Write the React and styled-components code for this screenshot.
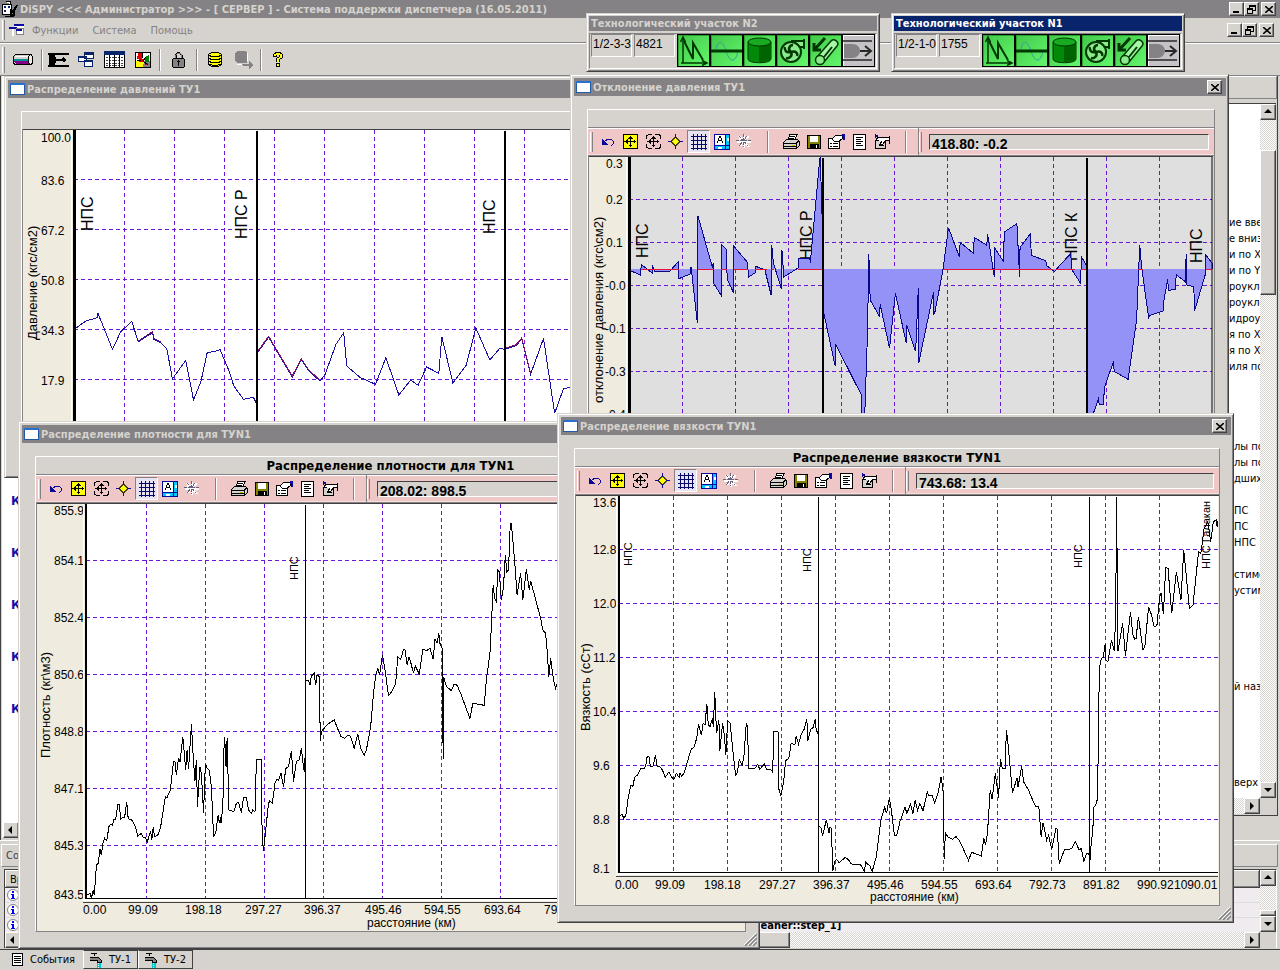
import React from 'react';
import styled, { createGlobalStyle, css } from 'styled-components';

const GlobalStyle = createGlobalStyle`
  * { box-sizing: border-box; }
  body {
    margin: 0;
    background: #d6d3ce;
    font-family: 'DejaVu Sans Condensed', 'DejaVu Sans', sans-serif;
    font-size: 11px;
    color: #000;
    overflow: hidden;
  }
  button { font: inherit; color: inherit; }
  svg { flex-shrink: 0; }
`;

const raised = css`
  border: 1px solid;
  border-color: #fff #424142 #424142 #fff;
  box-shadow: inset -1px -1px 0 #848284;
`;
const sunken = css`
  border: 1px solid;
  border-color: #848284 #fff #fff #848284;
`;

const App = styled.div`
  position: relative;
  display: flex;
  flex-direction: column;
  min-height: 100vh;
  overflow: hidden;
`;

const TitleBar = styled.header`
  display: flex;
  align-items: center;
  height: 18px;
  padding: 0 4px 0 2px;
  background: #848284;
  color: #d6d3ce;
  h1 {
    flex: 1;
    margin: 0 0 0 2px;
    font-size: 11px;
    font-weight: bold;
    white-space: nowrap;
  }
`;
const MenuBar = styled.nav`
  display: flex;
  align-items: center;
  height: 25px;
  padding: 0 6px 0 2px;
  border-bottom: 1px solid #848284;
`;
const MenuItem = styled.button`
  margin-right: 14px;
  padding: 0;
  border: 0;
  background: none;
  color: #848284;
`;
const MainToolbar = styled.div`
  display: flex;
  align-items: center;
  height: 33px;
  padding: 0 2px;
  border-top: 1px solid #fff;
  border-bottom: 1px solid #848284;
`;
const ToolButton = styled.button`
  display: flex;
  align-items: center;
  justify-content: center;
  width: ${({ $w }) => $w || 28}px;
  height: 24px;
  padding: 0;
  border: 0;
  background: none;
`;
const Grip = styled.span`
  width: 3px;
  height: ${({ $h }) => $h || 26}px;
  margin-right: ${({ $gap }) => $gap || 0}px;
  border-left: 1px solid #fff;
  border-right: 1px solid #848284;
`;
const Divider = styled.span`
  width: 2px;
  height: 22px;
  margin: 0 ${({ $gap = 4 }) => $gap}px;
  border-left: 1px solid #848284;
  border-right: 1px solid #fff;
`;

const WinButtons = styled.div`
  display: flex;
  margin-left: auto;
  button:last-child { margin-left: 2px; }
`;
const WinButton = styled.button`
  ${raised}
  display: flex;
  align-items: center;
  justify-content: center;
  width: 15px;
  height: 14px;
  padding: 0;
  background: #d6d3ce;
`;

const Workspace = styled.main`
  display: flex;
  align-items: flex-start;
  flex: 1;
  padding-left: 1px;
  border-left: 1px solid #424142;
`;
const TreePane = styled.section`
  display: flex;
  flex-direction: column;
  width: 40px;
  height: 762px;
  border-left: 1px solid #fff;
  background: #fff;
  ul {
    flex: 1;
    margin: 0;
    padding: 399px 0 0 8px;
    list-style: none;
  }
  li {
    height: 52px;
    line-height: 52px;
    color: #1810a5;
    font-size: 13px;
    font-weight: bold;
  }
`;
const HintPane = styled.section`
  flex: 1;
  height: 740px;
  margin-right: 2px;
  border-right: 1px solid #424142;
  border-bottom: 1px solid #424142;
`;
const PaneCaption = styled.div`
  height: 23px;
  padding: 4px;
  border: 1px solid;
  border-color: #fff #848284 #848284 #fff;
`;
const HintBody = styled.div`
  display: grid;
  grid-template-columns: 1fr 16px;
  grid-template-rows: 694px 16px;
  margin: 4px 1px 0 0;
  border-top: 1px solid #424142;
`;
const HintList = styled.ul`
  margin: 0;
  padding: 111px 0 0;
  background: #fff;
  list-style: none;
  overflow: hidden;
`;
const HintLine = styled.li`
  width: ${({ $w }) => $w}px;
  height: 16px;
  margin-left: auto;
  line-height: 16px;
  white-space: pre;
  overflow: hidden;
`;

const ScrollTrack = styled.div`
  display: flex;
  flex-direction: ${({ $dir }) => ($dir === 'row' ? 'row' : 'column')};
  background: repeating-conic-gradient(#fff 0 25%, #d6d3ce 0 50%) 0 0 / 2px 2px;
`;
const ScrollButton = styled.button`
  ${raised}
  display: flex;
  align-items: center;
  justify-content: center;
  width: 16px;
  height: 16px;
  padding: 0;
  background: #d6d3ce;
`;
const ScrollThumb = styled.div`
  ${raised}
  background: #d6d3ce;
  ${({ $dir, $size }) => ($dir === 'row' ? `width: ${$size}px;` : `height: ${$size}px;`)}
`;
const Spring = styled.div`
  ${({ $size }) => ($size ? `flex: 0 0 ${$size}px;` : 'flex: 1;')}
`;

const LogDock = styled.section`
  height: 110px;
  padding: 3px 2px 0 1px;
  border-top: 1px solid #fff;
  border-bottom: 1px solid #424142;
`;
const LogCaption = styled(PaneCaption)`
  color: #424142;
`;
const LogBody = styled.div`
  display: grid;
  grid-template-columns: 1fr 16px;
  grid-template-rows: 62px 16px;
  margin: 2px 1px 0 3px;
  border-top: 1px solid #424142;
  border-left: 1px solid #424142;
  border-right: 1px solid #fff;
`;
const LogTable = styled.table`
  width: 100%;
  border-collapse: collapse;
  table-layout: fixed;
  background: #efebef;
  th, td {
    height: 15px;
    padding: 0;
    text-align: left;
    line-height: 13px;
    white-space: nowrap;
    overflow: hidden;
    border-bottom: 1px solid #dedbde;
  }
  th {
    ${raised}
    height: 17px;
    padding-left: 4px;
    background: #d6d3ce;
    font-weight: normal;
  }
  th:first-child, td:first-child { width: 755px; }
  tbody tr:last-child td { border-top: 1px dotted #000; font-weight: bold; }
  svg { display: block; }
`;

const TabStrip = styled.div`
  display: flex;
  align-items: stretch;
  height: 20px;
`;
const Tab = styled.button`
  display: flex;
  align-items: center;
  gap: ${({ $active }) => ($active ? 7 : 5)}px;
  height: 19px;
  padding: 0 ${({ $active }) => ($active ? '8px 0 12px' : '6px 0 5px')};
  border: 0;
  background: #d6d3ce;
  ${({ $active }) => !$active && css`
    border-left: 1px solid #fff;
    border-right: 1px solid #424142;
    border-bottom: 1px solid #424142;
    border-top: 1px solid #424142;
  `}
`;

/* floating windows */
const Frame = styled.section`
  position: absolute;
  left: ${({ $x }) => $x}px;
  top: ${({ $y }) => $y}px;
  width: ${({ $w }) => $w}px;
  height: ${({ $h }) => $h}px;
  padding: 2px;
  border: 1px solid;
  border-color: #d6d3ce #424142 #424142 #d6d3ce;
  box-shadow: inset 1px 1px 0 #fff, inset -1px -1px 0 #848284;
  background: #d6d3ce;
`;
const FrameTitle = styled.header`
  display: flex;
  align-items: center;
  height: 18px;
  margin: 1px 0 0 1px;
  padding: 0 4px 0 2px;
  background: #848284;
  color: #d6d3ce;
  h2 {
    flex: 1;
    margin: 0 0 0 2px;
    font-size: 11px;
    font-weight: bold;
    white-space: nowrap;
  }
`;
const FramePanel = styled.div`
  margin: 13px 11px 0 14px;
  border: 1px solid;
  border-color: #fff #848284 #848284 #fff;
`;
const PanelHeading = styled.h3`
  height: 17px;
  margin: 0;
  font-size: 13px;
  line-height: 17px;
  text-align: center;
`;
const PinkBar = styled.div`
  display: flex;
  align-items: center;
  height: 29px;
  border-top: 1px solid #848284;
  border-bottom: 1px solid #848284;
  box-shadow: inset 0 1px 0 #fff, inset 0 -1px 0 #f7dfde;
  background: #efc7c6;
`;
const PinkGroup = styled.div`
  display: flex;
  align-items: center;
  width: 331px;
  height: 27px;
  padding-left: 2px;
  border-right: 1px solid #848284;
`;
const PinkButton = styled.button`
  display: flex;
  align-items: center;
  justify-content: center;
  width: 23px;
  height: 23px;
  padding: 0;
  border: 1px solid transparent;
  background: none;
  ${({ $pressed }) => $pressed && css`
    border-color: #848284 #fff #fff #848284;
    background: #e7e3f0;
  `}
`;
const Readout = styled.output`
  flex: 1;
  height: 16px;
  margin: 0 5px;
  padding: 2px 2px 0;
  border: 1px solid;
  border-color: #424142 #fff #fff #424142;
  background: #d6d3ce;
  font-family: 'Liberation Sans', Arial, sans-serif;
  font-size: 14px;
  font-weight: bold;
  line-height: 14px;
  overflow: hidden;
`;
const ChartSvg = styled.svg`
  display: block;
  font-family: 'Liberation Sans', Arial, sans-serif;
  font-size: 12px;
`;
const ResizeGrip = styled.svg`
  position: absolute;
  right: 2px;
  bottom: 2px;
`;

/* floating section palettes */
const Palette = styled.section`
  position: absolute;
  left: ${({ $x }) => $x}px;
  top: 13px;
  width: 294px;
  padding: 2px;
  border: 1px solid;
  border-color: #d6d3ce #424142 #424142 #d6d3ce;
  box-shadow: inset 1px 1px 0 #fff, inset -1px -1px 0 #848284;
  background: #d6d3ce;
  h2 {
    height: 15px;
    margin: 0 0 2px;
    padding-left: 2px;
    background: ${({ $active }) => ($active ? '#08246b' : '#848284')};
    color: ${({ $active }) => ($active ? '#fff' : '#d6d3ce')};
    font-size: 11px;
    line-height: 15px;
    white-space: nowrap;
  }
`;
const PaletteBody = styled.div`
  ${sunken}
  display: flex;
  height: 36px;
  padding: 0 1px;
`;
const PaletteCell = styled.span`
  ${sunken}
  width: ${({ $w }) => $w}px;
  height: 23px;
  margin-right: 2px;
  padding: 2px 0 0 1px;
  font-family: 'Liberation Sans', Arial, sans-serif;
  font-size: 12px;
  line-height: 14px;
  white-space: nowrap;
`;
const StateButton = styled.button`
  width: 33px;
  height: 33px;
  padding: 0;
  border: 1px solid #000;
  background: ${({ $off }) => ($off ? '#c6c3c6' : 'linear-gradient(135deg, #42c74a, #63f76b)')};
  box-shadow: inset 1px 1px 0 ${({ $off }) => ($off ? '#fff' : '#29a229')};
  svg { display: block; }
`;

const Arrow = ({ dir }) => {
  const d = { up: 'M0 5L4 1L8 5z', down: 'M0 2L4 6L8 2z', left: 'M5 0L1 4L5 8z', right: 'M2 0L6 4L2 8z' }[dir];
  return <svg width="8" height="8" aria-hidden="true"><path d={d} /></svg>;
};

const VScroll = ({ offset, thumb }) => (
  <ScrollTrack>
    <ScrollButton aria-label="Вверх"><Arrow dir="up" /></ScrollButton>
    <Spring $size={offset} />
    <ScrollThumb $size={thumb} />
    <Spring />
    <ScrollButton aria-label="Вниз"><Arrow dir="down" /></ScrollButton>
  </ScrollTrack>
);

const HScroll = ({ thumb }) => (
  <ScrollTrack $dir="row">
    <ScrollButton aria-label="Влево"><Arrow dir="left" /></ScrollButton>
    <ScrollThumb $dir="row" $size={thumb} />
    <Spring />
    <ScrollButton aria-label="Вправо"><Arrow dir="right" /></ScrollButton>
  </ScrollTrack>
);

const CloseGlyph = () => (
  <svg width="8" height="7" stroke="#000"><path d="M0 0L8 7M8 0L0 7" strokeWidth="1.6" /></svg>
);

const WindowControls = () => (
  <WinButtons>
    <WinButton aria-label="Свернуть"><svg width="8" height="8"><path d="M0 6h6v2H0z" /></svg></WinButton>
    <WinButton aria-label="Восстановить">
      <svg width="9" height="9" fill="none" stroke="#000" shapeRendering="crispEdges">
        <path d="M2.5 3V.5h6v5H6M2 1.5h7M.5 3.5h5v5h-5zM0 4.5h6" />
      </svg>
    </WinButton>
    <WinButton aria-label="Закрыть"><CloseGlyph /></WinButton>
  </WinButtons>
);

/* ---- icons ---- */
const icon = (w, h, body) => (
  <svg width={w} height={h} viewBox={`0 0 ${w} ${h}`} fill="none" stroke="#000" shapeRendering="crispEdges" aria-hidden="true">
    {body}
  </svg>
);

const appIcon = icon(16, 16, <>
  <path d="M.5 3.5h9v10h-9zM3.5.5h5v3" fill="#fff" />
  <path d="M2 5h2v2H2zM6 5h2v2H6zM2 9h2v2H2z" fill="#08246b" stroke="none" />
  <path d="M3 15.500h9M9 8v6h3V8M8 9l3 2 4-7" strokeWidth="2" />
</>);
const mdiIcon = icon(16, 14, <>
  <path d="M5 1h10v4H5z" fill="#fff" stroke="none" />
  <path d="M5 1h10v2H5zM0 4h8v2H0z" fill="#08089c" stroke="none" />
  <path d="M7.500 5.500h7v6h-7z" fill="#fff" stroke="#848284" />
  <path d="M7 6h6v2H7z" fill="#08089c" stroke="none" />
  <path d="M3.500 6v7" stroke="#fff" strokeWidth="2" />
</>);
const pipeIcon = icon(21, 12, <>
  <rect x=".5" y=".5" width="19" height="10" rx="3" fill="#d6d3ce" />
  <path d="M1 5h15v2H1z" fill="#009294" stroke="none" />
  <path d="M1 7h15v3H3z" fill="#840084" stroke="none" />
  <path d="M2 2.500h14" stroke="#fff" />
  <ellipse cx="17.500" cy="5.500" rx="2" ry="5" fill="#efebde" />
</>);
const valveIcon = icon(21, 14, <>
  <path d="M0 1h21M0 13h21" strokeWidth="2" />
  <path d="M1 2h5l2 5-2 5H1z" fill="#000" />
  <path d="M8 7h9M15 5l2 2-2 2" strokeWidth="1.500" />
</>);
const cascadeIcon = icon(16, 15, <>
  <path d="M6.500.5h9v6h-9zM.5 4.500h8v5h-8zM6.500 8.500h8v6h-8z" fill="#fff" stroke="#08246b" />
  <path d="M6 0h10v3H6zM0 4h9v2H0zM6 8h9v2H6z" fill="#08246b" stroke="none" />
</>);
const tableIcon = icon(21, 17, <>
  <path d="M.5.5h20v16H.5z" fill="#fff" />
  <path d="M0 0h21v4H0z" fill="#08246b" stroke="none" />
  <path d="M2 6.500h17M2 9.500h17M2 12.500h17M2 14.500h17" strokeDasharray="2 1" stroke="#424142" />
  <path d="M5.500 4v13M10.500 4v13M15.500 4v13" />
</>);
const puzzleIcon = icon(16, 16, <>
  <path d="M.5.5h15v15H.5z" fill="#fff" />
  <path d="M1 9l4-1 4 2v5H1z" fill="#ffff00" stroke="none" />
  <path d="M9 9h6v6H8z" fill="#848284" stroke="none" />
  <path d="M3 1h4v6h2v3H4V7H2zM10 11h3v2h-3z" fill="#e70000" stroke="none" />
  <path d="M9 6l5-3v7h-4z" fill="#008200" stroke="none" />
  <path d="M7 1v5M2 8h4M11 5l-3 4 5 4" />
</>);
const lockIcon = icon(13, 16, <>
  <path d="M3.500 7V3l2-2h2l2 2v4" strokeWidth="2" />
  <path d="M3.500 7V3l2-2h2l2 2v4" stroke="#fff" strokeWidth=".5" />
  <rect x=".5" y="6.500" width="12" height="9" rx="2" fill="#848284" />
  <path d="M6.500 8v6M5 9.500h3" />
</>);
const dbIcon = icon(14, 15, <>
  <path d="M.5 2.500l3-2h7l3 2v10l-3 2h-7l-3-2z" fill="#ffff00" />
  <path d="M1 3.500l3 1h6l3-1M1 6.500l3 1h6l3-1M1 9.500l3 1h6l3-1M1 12l3 1h6l3-1" />
</>);
const dbOffIcon = icon(19, 18, <>
  <path d="M1 2l3-2h7l2 2v10H4l-3-2z" fill="#848284" stroke="none" />
  <path d="M8 13h7v-3l4 4-4 4v-3H9z" fill="#848284" stroke="none" />
  <path d="M3 13.500h5M13.500 2v8" stroke="#fff" />
</>);
const helpIcon = icon(10, 15, <>
  <path d="M2 5V3l2-2h2l2 2v2L5 7v3" strokeWidth="3.500" />
  <path d="M2 4V3l2-1h2l2 1v2L5 7v3" stroke="#ffff00" strokeWidth="1.500" />
  <path d="M3.500 11.500h3v3h-3z" fill="#ffff00" />
</>);

const fourArrows = (
  <>
    <path d="M7.500 2v11M2 7.500h11" />
    <path d="M7.500 1.500l2.500 3H5zM7.500 13.500l2.500-3H5zM1.500 7.500l3-2.500v5zM13.500 7.500l-3-2.500v5z" fill="#000" stroke="none" />
  </>
);
const viewIcons = [
  ['Отменить', icon(13, 9, <><path d="M3 5l4-3h3l2 2v3l-2 2" stroke="#08089c" /><path d="M1 2v6h6z" fill="#08089c" stroke="none" /></>)],
  ['Увеличить', icon(15, 15, <><path d="M.5.5h14v14H.5z" fill="#ffff00" />{fourArrows}</>)],
  ['Весь график', icon(15, 15, <><path d="M.5 5V2l2-1.500H6M9 .5h4l1.500 1.500v3M.5 10v3l2 1.500H6M14.500 10v3l-1.500 1.500h-4" />{fourArrows}</>)],
  ['Центр', icon(15, 15, <><path d="M7.500 3l4.500 4.500L7.500 12 3 7.500z" fill="#ffff00" stroke="#424100" /><path d="M7.500 0v4M7.500 11v4M0 7.500h4M11 7.500h4" stroke="#08089c" /></>)],
  ['Сетка', icon(16, 16, <path d="M2.500 0v16M6.500 0v16M10.500 0v16M14.500 0v16M0 2.500h16M0 6.500h16M0 10.500h16M0 14.500h16" stroke="#08086b" />)],
  ['Подписи', icon(16, 16, <><path d="M.5.5h15v15H.5z" fill="#00c7ff" stroke="#08089c" /><path d="M1 1h10v10H1z" fill="#fff" stroke="none" /><path d="M11.500 1v14M1 11.500h14" stroke="#08089c" /><path d="M3 9l3-7 3 7M4 6.500h4" /><path d="M4 13.500h4M13.500 4v3" stroke="#fff" strokeWidth="2" /></>)],
  ['Без сетки', icon(16, 15, <><path d="M3 2l10 11M8 1v13M1 8h14M12 2L4 12M3 5l3 1M10 4l3-1" stroke="#fff" strokeWidth="2" /><path d="M3 2l9 10M7.500 0v13M0 6.500h15M11 2L3 12" stroke="#63617b" strokeDasharray="3 1" /></>)],
];
const fileIcons = [
  ['Печать', icon(17, 15, <><path d="M5 6l2-5.500h7L12 6" fill="#fff" /><path d="M.5 8.500l3-3h11l2 2v4l-3 3H.5z" fill="#d6d3ce" /><path d="M1 9.500h12v5M13 9l3-2M1 12.500h12M7 2.500h5M6 4.500h5" /><path d="M9 11h3" stroke="#c6c300" /></>)],
  ['Сохранить', icon(14, 14, <><path d="M.5.5h13v13H.5z" fill="#848200" /><path d="M3 1h8v6H3z" fill="#fff" stroke="none" /><path d="M3 9h8v5H3z" fill="#000" /><path d="M9.500 10v3" stroke="#fff" /></>)],
  ['Свойства', icon(17, 15, <><path d="M.5 4.500h11v10H.5z" fill="#fff" /><path d="M2 9.500h2M5 9.500h5M2 12.500h2M5 12.500h5" /><path d="M4 5l3-3 3-1 4 1v3l-3 2-4 1z" fill="#fff" /><path d="M14 0h3v6h-2z" fill="#08089c" stroke="none" /></>)],
  ['Легенда', icon(13, 16, <><path d="M.5.5h12v15H.5z" fill="#fff" /><path d="M3 3.500h7M3 5.500h5M3 7.500h7M3 9.500h5M3 11.500h7" /></>)],
  ['Экспорт', icon(17, 15, <><path d="M1.500 6.500h10v8h-10z" fill="#d6d3ce" /><path d="M2 6l2-3h11v3h-3l-3 4H6l2-3" fill="#fff" /><path d="M1 0l4 2-4 2z" fill="#08089c" stroke="none" /><path d="M15.500 2v8M5 11.500h5" /></>)],
];

const mainIcons = [
  ['Труба', pipeIcon, 32], null,
  ['Задвижка', valveIcon, 27], ['Окна', cascadeIcon, 28], ['Таблица', tableIcon, 29], ['Объекты', puzzleIcon, 28], null,
  ['Блокировка', lockIcon, 31], null,
  ['База данных', dbIcon, 29], ['Выгрузка', dbOffIcon, 29], null,
  ['Справка', helpIcon, 28],
];

const stateIcons = [
  ['Давление', <><path d="M5 28V3M2.500 7L5 2l2.500 5M3 28h25M24 25.500l5 2.500-5 2.500" strokeWidth="1.500" /><path d="M6 6l9 18V8l10 17" strokeWidth="2" /></>],
  ['Баланс', <><path d="M5 14c2-10 7-8 10 2s9 14 12 0" stroke="#399aa5" /><path d="M0 16h31" strokeWidth="3" /></>],
  ['Резервуар', <><path d="M4 7v17c0 5 23 5 23 0V7z" fill="#008a08" /><path d="M15 9v18c7 0 12-1 12-4V7z" fill="#006500" stroke="none" /><ellipse cx="15.500" cy="7" rx="11.500" ry="4" fill="#18aa21" /></>],
  ['Насос', <><path d="M14 6h13v6h-5" strokeWidth="2" fill="#8ceb8c" /><path d="M27 4v10" strokeWidth="2" /><circle cx="14" cy="17" r="10" fill="#8ceb8c" strokeWidth="2" /><path d="M14 17c-4-3-1-7 2-7M14 17c5-2 7 2 6 4M14 17c2 4-2 7-5 6M14 17c-5 1-7-2-6-5" strokeWidth="2.500" /></>],
  ['Скребок', <><path d="M7 22L21 6c3-3 9 1 6 5L14 27" fill="#a5f7a5" strokeWidth="1.500" /><circle cx="10" cy="25" r="4.500" fill="#8ceb8c" strokeWidth="1.500" /><path d="M14 22l8-10" strokeWidth="2" /><path d="M15 3L5 14M4 8v7h7" strokeWidth="3" /></>],
  ['Поток', <><path d="M0 6h29M0 25h29" strokeWidth="1.500" /><path d="M1 9h8c7 0 8 5 8 7s-2 7-8 7H1z" fill="#848284" stroke="none" /><path d="M17 16h10M22 11l6 5-6 5" strokeWidth="2" /></>],
];

const SectionPalette = ({ title, x, active, code, value }) => (
  <Palette $x={x} $active={active}>
    <h2>{title}</h2>
    <PaletteBody>
      <PaletteCell $w={41}>{code}</PaletteCell>
      <PaletteCell $w={42}>{value}</PaletteCell>
      {stateIcons.map(([label, body], i) => (
        <StateButton key={label} aria-label={label} $off={i === 5}>
          <svg width="31" height="31" fill="none" stroke={i === 5 ? '#292829' : '#003900'}>{body}</svg>
        </StateButton>
      ))}
    </PaletteBody>
  </Palette>
);

/* ---- charts ---- */
const Trace = ({ at, scale, points, color = '#000', fill = 'none' }) => (
  <polyline
    points={points}
    transform={`translate(${at}) scale(${scale})`}
    vectorEffect="non-scaling-stroke"
    fill={fill}
    stroke={color}
    shapeRendering="crispEdges"
  />
);

const Chart = ({ box, plot, bg = '#fff', xGrid, yGrid, yLabels, xLabels = [], xLabelY, xTitle, yTitle, stations, axis = 2, children }) => {
  const [x, y, w, h] = box;
  const [px, py, pr, pb] = plot;
  const clip = `ticks-${x}`;
  return (
    <ChartSvg width={w} height={h} viewBox={box.join(' ')} role="img" aria-label={yTitle.text}>
      <clipPath id={clip}><rect x={x} y={y} width={px - x - 3} height={h} /></clipPath>
      <rect x={x} y={y} width={w} height={h} fill="#efebde" />
      <rect x={px} y={py} width={pr - px} height={pb - py} fill={bg} />
      <g stroke="#6b18d6" strokeDasharray="4 3" shapeRendering="crispEdges">
        {xGrid.map((gx) => <line key={gx} x1={gx} x2={gx} y1={py} y2={pb} />)}
        {yGrid.map((gy) => <line key={gy} x1={px} x2={pr} y1={gy} y2={gy} />)}
      </g>
      {stations.map((s) => (
        <text key={s.x} fontSize={s.size} transform={`translate(${s.x} ${s.y}) rotate(-90)`}>{s.text}</text>
      ))}
      {children}
      <g stroke="#000" shapeRendering="crispEdges">
        {stations.filter((s) => s.line).map((s) => (
          <line key={s.line} x1={s.line} x2={s.line} y1={py + 1} y2={pb} strokeWidth={axis === 3 ? 2 : 1} />
        ))}
        <line x1={px} x2={px} y1={py} y2={pb + 1} strokeWidth={axis} />
        <line x1={px - 3} x2={px - 3} y1={py} y2={pb} stroke="#fff" />
        <line x1={x} x2={x + w} y1={y + 0.5} y2={y + 0.5} stroke="#424142" />
        <line x1={x + 0.5} x2={x + 0.5} y1={y} y2={y + h} stroke="#848284" />
        {xTitle && <line x1={px} x2={pr} y1={pb} y2={pb} />}
        {xTitle && <line x1={px - 3} x2={pr} y1={pb + 2} y2={pb + 2} stroke="#fff" strokeWidth="2" />}
        {xTitle && <line x1={px - 3} x2={pr} y1={pb + 4} y2={pb + 4} stroke="#424142" />}
      </g>
      <g clipPath={`url(#${clip})`}>
        {yLabels.map(([label, lx, ly]) => <text key={ly} x={lx} y={ly}>{label}</text>)}
      </g>
      <text fontSize={yTitle.size} transform={`translate(${yTitle.x} ${yTitle.y}) rotate(-90)`}>{yTitle.text}</text>
      {xLabels.map(([label, lx]) => <text key={label} x={lx} y={xLabelY}>{label}</text>)}
      {xTitle && <text x={xTitle.x} y={xTitle.y}>{xTitle.text}</text>}
    </ChartSvg>
  );
};

const steps = (from, step, count) => Array.from({ length: count }, (_, i) => from + step * i);

const PressureChart = () => (
  <Chart
    box={[22, 129, 610, 340]}
    plot={[74, 130, 632, 469]}
    axis={3}
    xGrid={steps(124.5, 50, 10)}
    yGrid={steps(179.5, 50, 6)}
    yLabels={[['100.0', 41, 142], ['83.6', 41, 185], ['67.2', 41, 235], ['50.8', 41, 285], ['34.3', 41, 335], ['17.9', 41, 385]]}
    yTitle={{ text: 'Давление (кгс/см2)', x: 37, y: 340, size: 13 }}
    stations={[
      { text: 'НПС', x: 93, y: 231, size: 16 },
      { text: 'НПС Р', x: 247, y: 239, size: 16, line: 257 },
      { text: 'НПС', x: 495, y: 234, size: 16, line: 505 },
    ]}
  >
    <Trace
      at="0 120" scale="0.37 0.3333" color="#1810a5"
      points="203,626 232,603 263,593 264,578 304,688 326,636 356,604 374,666 412,638 416,658 436,670 451,687 466,777 502,721 523,840 543,785 560,698 590,692 594,687 618,750 632,798 658,838 685,832 693,850 695,857 696,698 726,652 790,771 814,719 836,755 865,783 878,765 908,673 929,638 937,738 974,773 1015,793 1043,713 1078,825 1110,780 1130,796 1153,741 1186,760 1194,650 1224,789 1260,736 1286,624 1324,720 1350,686 1366,688 1395,677 1410,657 1434,763 1469,655 1499,880 1523,806 1545,801"
    />
    <Trace at="0 119" scale="0.37 0.3333" color="#63106b" points="374,666 412,638 416,658 436,670" />
    <Trace at="0 119" scale="0.37 0.3333" color="#8c1063" points="696,698 726,652 790,771 814,719 836,755 865,783" />
    <Trace at="0 119" scale="0.37 0.3333" color="#8c1063" points="1366,688 1395,677 1410,657 1434,763" />
  </Chart>
);

const DeviationChart = () => (
  <Chart
    box={[588, 156, 625, 300]}
    plot={[629, 157, 1212, 456]}
    bg="#dedfde"
    axis={3}
    xGrid={steps(682.5, 53, 10)}
    yGrid={steps(199.5, 43, 6)}
    yLabels={[['0.3', 606, 168], ['0.2', 606, 204], ['0.1', 606, 247], ['-0.0', 605, 290], ['-0.1', 605, 333], ['-0.3', 605, 376], ['-0.4', 605, 419]]}
    yTitle={{ text: 'отклонение давления (кгс\\см2)', x: 603, y: 403, size: 13 }}
    stations={[
      { text: 'НПС', x: 648, y: 258, size: 16 },
      { text: 'НПС Р', x: 812, y: 260, size: 16, line: 823 },
      { text: 'НПС К', x: 1077, y: 261, size: 16, line: 1087 },
      { text: 'НПС', x: 1202, y: 263, size: 16 },
    ]}
  >
    <Trace
      at="575 120" scale="0.45 0.3333" color="#08088c" fill="#9492f7"
      points="120,447 122,451 146,466 147,433 172,460 173,441 178,455 210,455 230,424 231,476 256,462 258,440 272,610 273,287 305,440 307,430 308,490 325,526 326,374 337,388 338,476 352,518 353,379 384,428 385,472 401,458 402,439 422,450 436,526 437,374 441,430 459,508 460,391 464,471 496,444 497,415 522,415 523,428 543,130 545,110 550,330 552,447 553,580 578,737 579,672 636,824 637,880 644,880 650,640 653,402 656,540 677,590 678,553 699,684 712,520 736,668 737,616 757,694 763,503 764,728 797,515 797,585 800,575 818,447 830,323 854,410 856,367 886,401 887,352 915,376 917,343 932,472 933,385 952,424 954,336 982,311 988,470 989,383 1012,341 1014,406 1046,422 1048,437 1066,455 1070,447 1102,400 1103,447 1124,491 1125,409 1138,440 1139,880 1152,880 1163,838 1165,853 1175,853 1176,804 1197,724 1198,754 1229,778 1248,600 1255,375 1259,440 1275,596 1276,587 1307,573 1308,548 1317,477 1319,511 1334,508 1336,464 1357,486 1358,402 1359,495 1375,500 1377,572 1401,462 1402,405 1417,432 1417,447"
    />
    {/* zero level, drawn only where the deviation is not negative */}
    <path
      d="M641 269.500h38M698 269.500h16M721 269.500h6M734 269.500h14M755 269.500h12M771 269.500h3M798 269.500h25M943 269.500h110M1056 269.500h19M1081 269.500h6M1138 269.500h5M1206 269.500h6"
      stroke="#e71039"
      shapeRendering="crispEdges"
    />
    <line x1="1212" x2="1212" y1="156" y2="456" stroke="#000" />
  </Chart>
);

const DensityChart = () => (
  <Chart
    box={[36, 503, 709, 428]}
    plot={[86, 504, 742, 898]}
    xGrid={steps(146.5, 59, 11)}
    yGrid={steps(560.5, 57, 6)}
    yLabels={[['855.9', 54, 515], ['854.1', 54, 565], ['852.4', 54, 622], ['850.6', 54, 679], ['848.8', 54, 736], ['847.1', 54, 793], ['845.3', 54, 850], ['843.5', 54, 899]]}
    yTitle={{ text: 'Плотность (кг\\м3)', x: 50, y: 758, size: 13 }}
    xLabelY={914}
    xLabels={[['0.00', 83], ['99.09', 128], ['198.18', 185], ['297.27', 245], ['396.37', 304], ['495.46', 365], ['594.55', 424], ['693.64', 484], ['792.73', 544]]}
    xTitle={{ text: 'расстояние (км)', x: 367, y: 927 }}
    stations={[{ text: 'НПС', x: 298, y: 580, size: 11, line: 305.5 }]}
  >
    <Trace
      at="0 690" scale="0.3571 0.3333"
      points="243,615 252,610 256,625 261,600 264,614 270,526 275,520 280,478 284,496 288,460 293,445 299,452 305,410 311,402 315,405 319,388 324,388 330,344 334,344 338,388 344,382 349,382 355,336 359,386 369,390 375,402 379,410 386,438 396,430 402,444 408,444 412,457 417,440 422,424 425,450 429,412 433,440 443,434 450,410 463,320 468,322 477,300 486,215 490,215 494,256 500,204 504,216 512,140 520,240 524,180 528,238 536,103 541,200 546,272 550,210 553,350 556,290 560,232 564,250 570,370 575,222 580,234 586,240 592,290 598,438 604,430 611,374 614,400 618,380 619,400 624,350 628,140 631,170 633,230 636,144 641,360 655,365 662,340 668,338 676,368 682,322 690,322 696,360 704,370 708,360 714,366 718,210 732,208 734,440 738,482 746,400 752,340 756,332 762,340 768,300 770,280 776,268 780,272 787,250 794,292 800,236 808,230 816,182 822,275 830,214 838,210 844,173 848,215 852,245 854,205"
    />
    <Trace
      at="0 420" scale="0.3571 0.3333"
      points="855,780 864,782 868,796 872,768 880,760 884,795 888,765 894,770 897,963 900,935 915,915 928,905 936,900 945,925 955,950 966,955 975,945 982,950 992,985 1002,942 1010,985 1020,1006 1026,990 1038,920 1046,820 1052,765 1058,745 1063,765 1071,705 1078,750 1088,826 1095,818 1108,790 1114,710 1122,718 1130,688 1134,690 1140,735 1146,710 1152,735 1158,760 1163,738 1174,762 1184,688 1195,692 1204,685 1213,718 1218,658 1224,668 1229,640 1232,670 1238,685 1241,1016 1242,770 1250,800 1264,812 1272,792 1280,796 1290,820 1316,896 1324,850 1356,856 1362,780 1372,700 1376,620 1381,495 1385,535 1390,545 1394,450 1398,455 1404,540 1410,500 1415,404 1419,455 1424,450 1429,310 1432,310 1441,420 1448,525 1458,460 1464,540 1474,448 1482,510 1486,483 1498,530 1515,600 1520,630 1528,640 1532,690 1537,770 1542,715 1550,780 1556,805 1562,785"
    />
  </Chart>
);

const ViscosityChart = () => (
  <Chart
    box={[575, 495, 644, 410]}
    plot={[619, 496, 1218, 872]}
    xGrid={steps(673.5, 54, 10)}
    yGrid={steps(549.5, 54, 6)}
    yLabels={[['13.6', 593, 507], ['12.8', 593, 554], ['12.0', 593, 608], ['11.2', 593, 662], ['10.4', 593, 716], ['9.6', 593, 770], ['8.8', 593, 824], ['8.1', 593, 873]]}
    yTitle={{ text: 'Вязкость (сСт)', x: 590, y: 731, size: 13 }}
    xLabelY={889}
    xLabels={[['0.00', 615], ['99.09', 655], ['198.18', 704], ['297.27', 759], ['396.37', 813], ['495.46', 867], ['594.55', 921], ['693.64', 975], ['792.73', 1029], ['891.82', 1083], ['990.92', 1137], ['1090.01', 1174]]}
    xTitle={{ text: 'расстояние (км)', x: 870, y: 901 }}
    stations={[
      { text: 'НПС', x: 632, y: 566, size: 11 },
      { text: 'НПС', x: 811, y: 572, size: 11, line: 818.5 },
      { text: 'НПС', x: 1082, y: 568, size: 11, line: 1089.5 },
      { text: 'НПС Галакан', x: 1210, y: 569, size: 11 },
    ]}
  >
    <Trace
      at="555 690" scale="0.463 0.3333"
      points="141,376 146,374 148,386 153,376 158,325 164,285 168,290 172,262 178,255 186,234 192,236 196,226 199,200 203,200 206,230 212,228 217,194 220,228 226,230 232,240 238,262 246,246 252,262 257,268 262,250 268,262 270,248 274,260 280,245 286,215 294,178 300,172 306,145 310,102 316,135 320,100 324,105 328,42 331,105 335,110 340,85 342,112 345,6 349,130 354,90 356,182 362,98 366,140 369,195 373,92 378,98 384,180 390,256 394,248 398,208 404,226 408,200 413,102 416,110 418,235 432,235 438,222 442,238 452,222 458,240 466,238 470,246 473,124 482,126 483,295 488,317 494,275 498,212 505,205 510,160 518,165 521,138 526,162 532,132 538,118 544,88 546,152 552,118 558,112 562,86 564,118 569,135 570,410 574,412 578,437 586,390 592,430 594,412 597,415 600,542 604,515 608,508 614,518 627,502 634,510 640,522 660,524 668,545 671,517 680,528 685,545 694,500 704,390 712,352 716,370 722,325 726,355 733,435 738,437 745,395 756,352 760,370 768,342 773,372 778,330 783,362 788,342 795,362 804,306 808,318 814,315 820,338 828,305 834,260 838,302 841,508 843,428 848,440 858,448 866,440 873,450 893,511 900,487 921,498 926,445 930,465 934,430 940,300 944,328 951,250 958,325 962,206 966,235 972,235 975,120 979,170 988,308 998,264 1000,292 1008,228 1012,275 1022,298 1030,325 1038,350 1045,350 1050,440 1054,398 1062,450 1066,436 1073,478 1082,415 1085,418 1089,522 1100,480 1108,480 1116,475 1124,455 1132,480 1137,475 1142,515 1148,490 1153,492 1156,510"
    />
    <Trace
      at="555 415" scale="0.463 0.3333"
      points="1156,1335 1156,1315 1160,1265 1163,1215 1163,1177 1168,1170 1172,1150 1174,900 1176,760 1180,730 1184,728 1188,688 1190,735 1194,740 1202,675 1208,708 1211,600 1213,245 1214,430 1216,708 1226,625 1232,722 1243,590 1248,660 1252,672 1255,670 1260,605 1270,706 1274,695 1282,575 1288,598 1294,635 1300,632 1306,545 1309,535 1314,598 1319,458 1324,460 1332,595 1342,470 1352,555 1358,405 1364,490 1370,580 1378,570 1384,490 1390,410 1395,415 1402,340 1410,320 1416,380 1422,320 1428,315 1430,335 1432,318"
    />
  </Chart>
);

const ChartWindow = ({ title, heading, readout, x, y, w, h, children }) => (
  <Frame $x={x} $y={y} $w={w} $h={h}>
    <FrameTitle>
      {icon(15, 12, <><path d="M.5.5h14v11H.5z" fill="#fff" stroke="#2159a5" /><path d="M0 0h15v2H0z" fill="#2971ce" stroke="none" /></>)}
      <h2>{title}</h2>
      <WinButton aria-label="Закрыть"><CloseGlyph /></WinButton>
    </FrameTitle>
    <FramePanel>
      <PanelHeading>{heading}</PanelHeading>
      {readout && (
        <PinkBar>
          <PinkGroup>
            <Grip $h={20} $gap={3} />
            {viewIcons.map(([label, glyph]) => (
              <PinkButton key={label} aria-label={label} $pressed={label === 'Сетка'}>{glyph}</PinkButton>
            ))}
            <Divider $gap={11} />
            {fileIcons.map(([label, glyph]) => (
              <PinkButton key={label} aria-label={label}>{glyph}</PinkButton>
            ))}
            <Divider $gap={11} />
          </PinkGroup>
          <Grip $h={20} $gap={2} />
          <Readout>{readout}</Readout>
        </PinkBar>
      )}
      {children}
    </FramePanel>
    <ResizeGrip width="13" height="13" aria-hidden="true">
      <path d="M1 13L13 1M5 13L13 5M9 13L13 9" stroke="#848284" strokeWidth="1.500" />
      <path d="M0 12L12 0M4 12L12 4M8 12L12 8" stroke="#fff" />
    </ResizeGrip>
  </Frame>
);

const hints = [
  'ие вве', 'е вниз', 'и по X', 'и по Y', 'роукло', 'роукло', 'идроук', 'я по X', 'я по X', 'иля по',
  '', '', '', '', 'лы по', 'лы по', 'дших', '', 'ПС', 'ПС', 'НПС', '', 'стимо', 'устим',
  '', '', '', '', '', 'й наз', '', '', '', '', '', 'верх',
];

const InfoIcon = () => (
  <svg width="14" height="13" aria-hidden="true">
    <circle cx="7" cy="6" r="5.500" fill="#fff" stroke="#848284" />
    <path d="M6 2h2v2H6zM5 5h3v4h1v1H5V9h1V6H5z" fill="#0000ff" />
  </svg>
);

const tapIcon = icon(15, 16, <>
  <path d="M2 1h6M5 1v3M1 5h8l3 3v2H8V8H1" fill="#848284" />
  <path d="M8 11h4v5H8z" fill="#00c7ce" stroke="none" />
  <path d="M9.500 11v5" stroke="#fff" strokeDasharray="1 1" />
</>);

const Dispy = () => (
  <App>
    <GlobalStyle />
    <TitleBar>
      {appIcon}
      <h1>{'DiSPY <<< Администратор >>> - [ СЕРВЕР ] - Система поддержки диспетчера (16.05.2011)'}</h1>
      <WindowControls />
    </TitleBar>
    <MenuBar>
      <Grip $h={20} $gap={4} />
      <ToolButton $w={16} aria-label="Меню окна">{mdiIcon}</ToolButton>
      <Spring $size={7} />
      {['Функции', 'Система', 'Помощь'].map((item) => <MenuItem key={item}>{item}</MenuItem>)}
      <WindowControls />
    </MenuBar>
    <MainToolbar>
      <Grip $gap={2} />
      {mainIcons.map((item, i) => (item
        ? <ToolButton key={item[0]} aria-label={item[0]} $w={item[2]}>{item[1]}</ToolButton>
        : <Divider key={i} $gap={2} />
      ))}
    </MainToolbar>

    <Workspace>
      <TreePane>
        <ul>{steps(1, 1, 5).map((n) => <li key={n}>К</li>)}</ul>
        <HScroll thumb={0} />
      </TreePane>
      <HintPane>
        <PaneCaption />
        <HintBody>
          <HintList>
            {hints.map((line, i) => <HintLine key={i} $w={i < 12 ? 31 : 26}>{line}</HintLine>)}
          </HintList>
          <VScroll offset={30} thumb={145} />
          <HScroll thumb={500} />
        </HintBody>
      </HintPane>
    </Workspace>

    <LogDock>
      <LogCaption>Со</LogCaption>
      <LogBody>
        <LogTable>
          <thead><tr><th>Вр</th><th aria-label="Сообщение" /></tr></thead>
          <tbody>
            <tr><td><InfoIcon /></td><td /></tr>
            <tr><td><InfoIcon /></td><td /></tr>
            <tr><td><InfoIcon /></td><td>eaner::step_1]</td></tr>
          </tbody>
        </LogTable>
        <VScroll offset={24} thumb={6} />
        <HScroll thumb={769} />
      </LogBody>
    </LogDock>

    <TabStrip>
      <Tab $active>
        {icon(11, 13, <><path d="M.5.5h10v12H.5z" fill="#fff" /><path d="M2 3.500h7M2 5.500h7M2 7.500h7M2 9.500h7" /></>)}
        События
      </Tab>
      <Tab>{tapIcon}ТУ-1</Tab>
      <Tab>{tapIcon}ТУ-2</Tab>
    </TabStrip>

    <ChartWindow title="Распределение давлений ТУ1" x={4} y={76} w={640} h={402}>
      <PressureChart />
    </ChartWindow>
    <ChartWindow title="Отклонение давления ТУ1" readout="418.80: -0.2" x={570} y={74} w={659} h={420}>
      <DeviationChart />
    </ChartWindow>
    <ChartWindow title="Распределение плотности для ТУN1" heading="Распределение плотности для ТУN1" readout="208.02: 898.5" x={18} y={421} w={742} h={528}>
      <DensityChart />
    </ChartWindow>
    <ChartWindow title="Распределение вязкости ТУN1" heading="Распределение вязкости ТУN1" readout="743.68: 13.4" x={557} y={413} w={677} h={510}>
      <ViscosityChart />
    </ChartWindow>

    <SectionPalette title="Технологический участок N2" x={586} code="1/2-3-3" value="4821" />
    <SectionPalette title="Технологический участок N1" x={891} code="1/2-1-0" value="1755" active />
  </App>
);

export default Dispy;
